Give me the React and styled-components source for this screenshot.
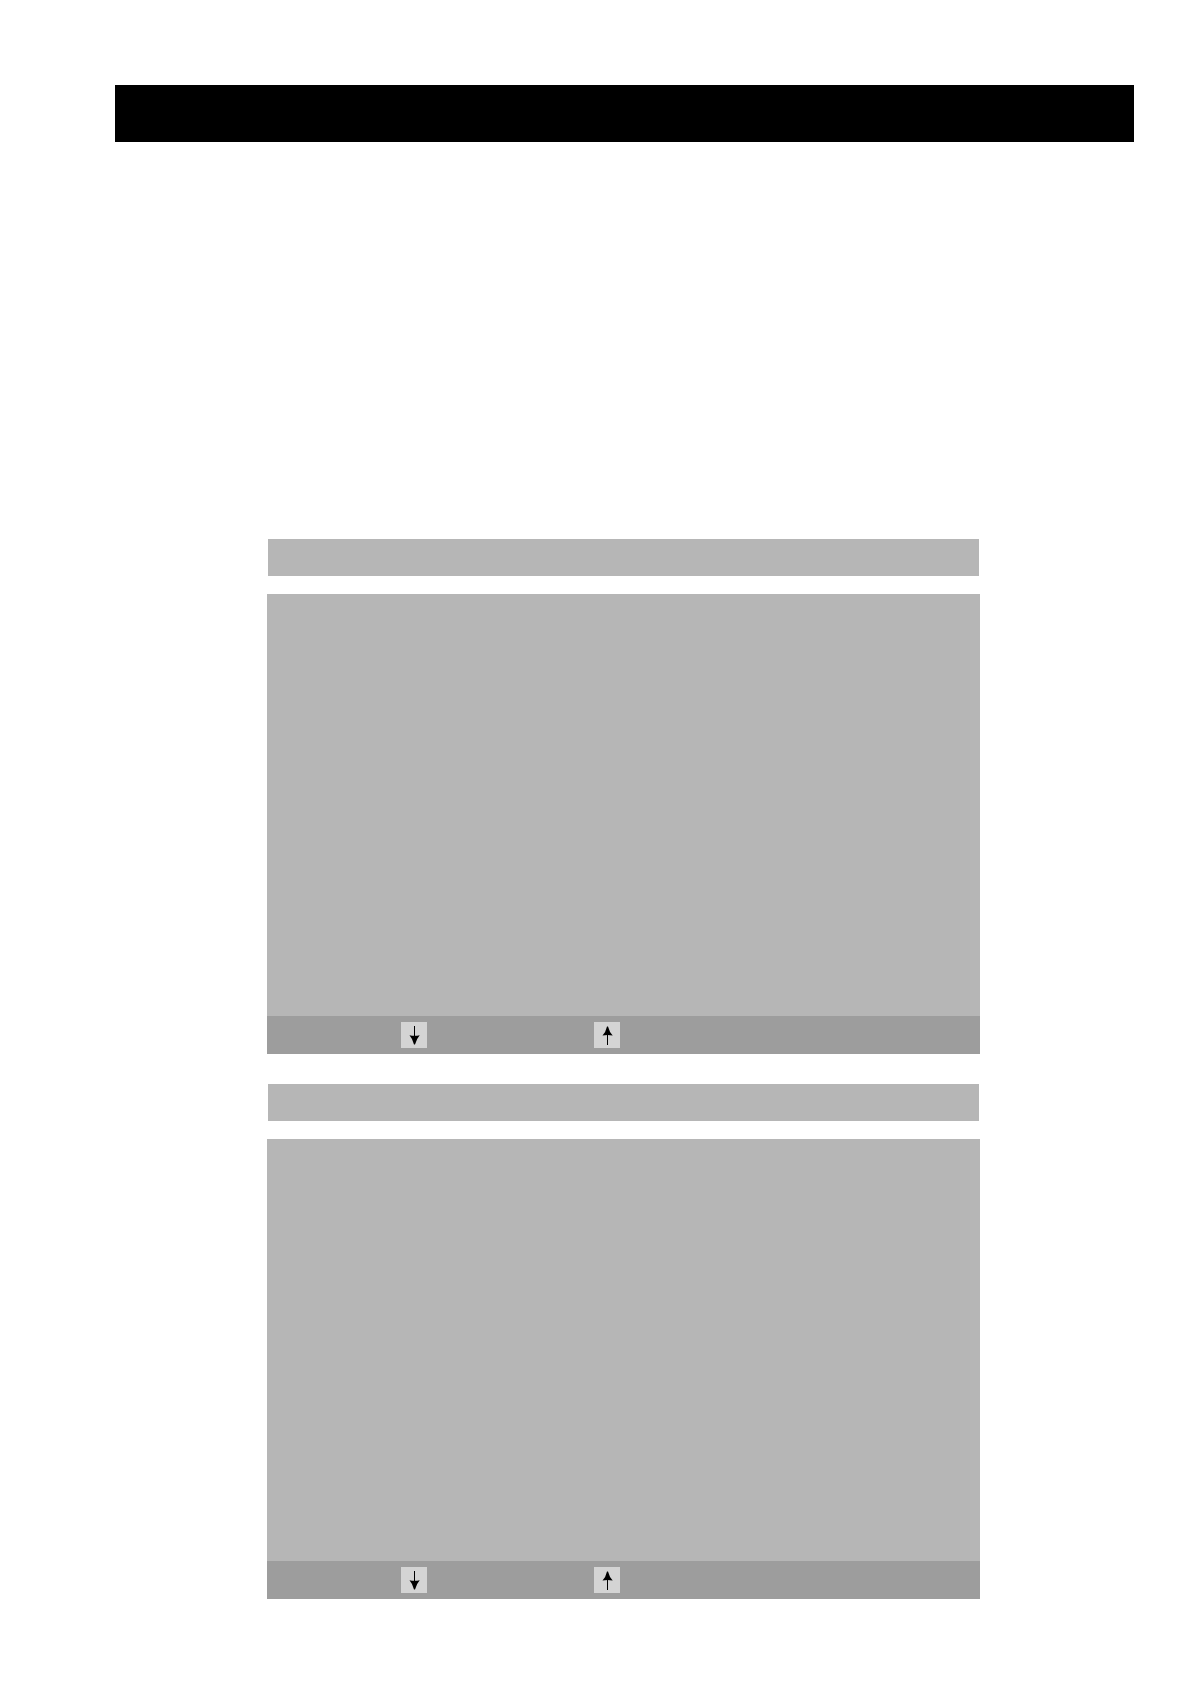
import React from "react";
import styled, { createGlobalStyle } from "styled-components";

export default function App() {
  const screens = ["first", "second"];

  return (
    <>
      <GlobalStyle />
      <Page>
        <Header />
        <Main>
          {screens.map((screen) => (
            <Screen key={screen}>
              <TitleBar />
              <Panel>
                <PanelBody />
                <PanelFooter>
                  <Key type="button" aria-label="Down">
                    <svg viewBox="0 0 26 26" aria-hidden="true">
                      <path d="M13 4h1v11h-1z" />
                      <path d="M8.5 13.2Q13.5 14.2 18.7 13.2Q15.4 17 14 22.5h-1Q11.8 17 8.5 13.2z" />
                    </svg>
                  </Key>
                  <Key type="button" aria-label="Up">
                    <svg viewBox="0 0 26 26" aria-hidden="true">
                      <path d="M13 12h1v11h-1z" />
                      <path d="M8.5 13.6Q13.5 12.6 18.7 13.6Q15.4 10 14 4.5h-1Q11.8 10 8.5 13.6z" />
                    </svg>
                  </Key>
                </PanelFooter>
              </Panel>
            </Screen>
          ))}
        </Main>
      </Page>
    </>
  );
}

const GlobalStyle = createGlobalStyle`
  * {
    box-sizing: border-box;
  }

  body {
    margin: 0;
    background: #ffffff;
    font-family: "Liberation Sans", Arial, sans-serif;
  }
`;

const Page = styled.div`
  display: flex;
  flex-direction: column;
  padding: 85px 56px 85px 115px;
`;

const Header = styled.header`
  height: 57px;
  background: #000000;
`;

const Main = styled.main`
  display: flex;
  flex-direction: column;
  gap: 30px;
  margin-top: 397px;
  padding: 0 154px 0 152px;
`;

const Screen = styled.section`
  display: flex;
  flex-direction: column;
  gap: 18px;
`;

const TitleBar = styled.div`
  height: 37px;
  margin: 0 1px;
  background: #b6b6b6;
`;

const Panel = styled.div`
  display: flex;
  flex-direction: column;
`;

const PanelBody = styled.div`
  min-height: 422px;
  background: #b6b6b6;
`;

const PanelFooter = styled.div`
  display: flex;
  align-items: center;
  gap: 167px;
  padding: 6px 0 6px 134px;
  background: #9d9d9d;
`;

const Key = styled.button`
  flex: none;
  width: 26px;
  height: 26px;
  padding: 0;
  border: none;
  background: #d4d4d4;
  cursor: pointer;

  svg {
    display: block;
    width: 26px;
    height: 26px;
    fill: #000000;
  }
`;
